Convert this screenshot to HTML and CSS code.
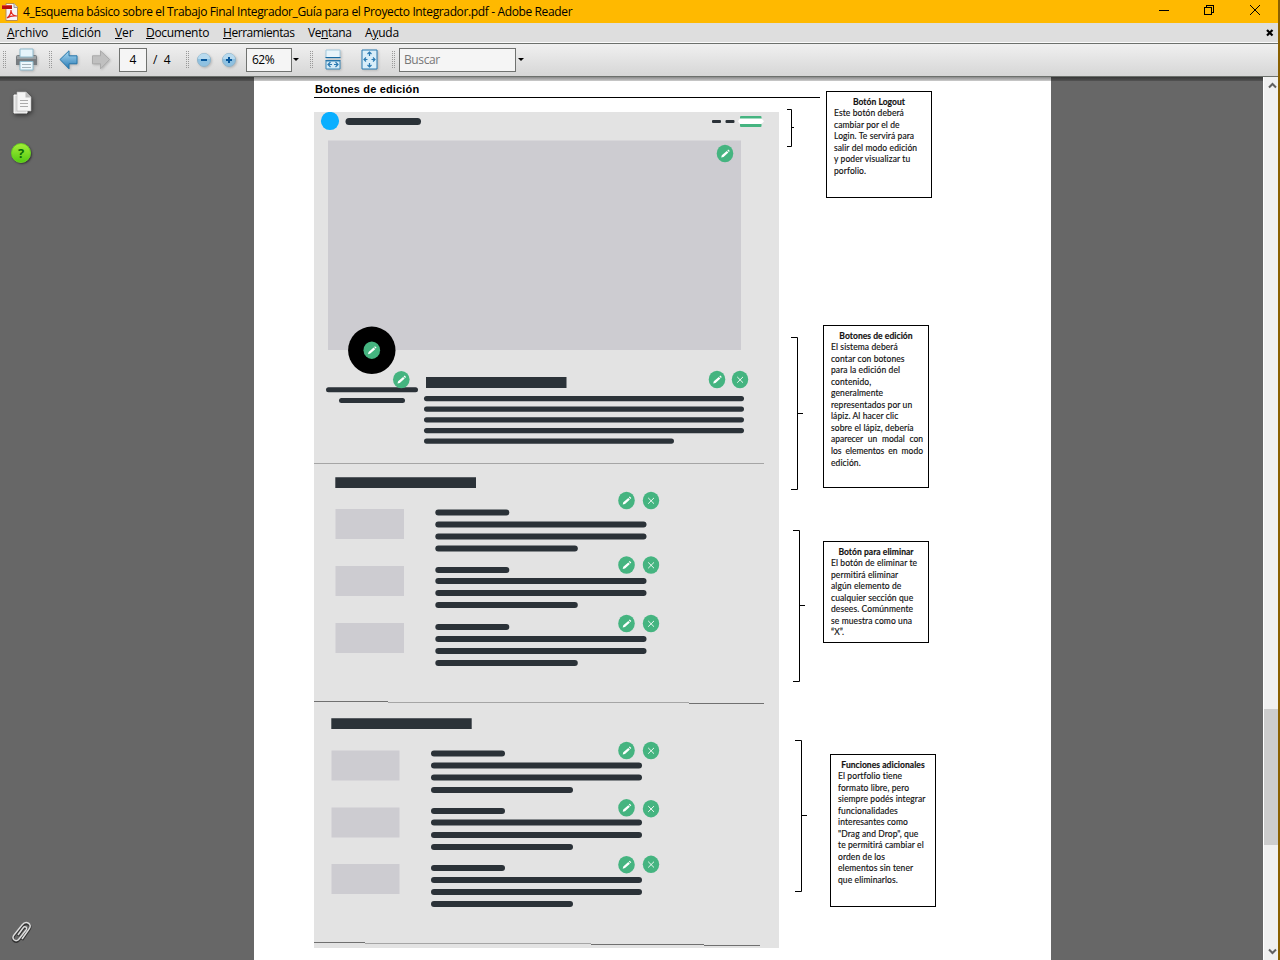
FILE: index.html
```html
<!DOCTYPE html>
<html lang="es">
<head>
<meta charset="utf-8">
<title>Adobe Reader</title>
<link rel="stylesheet" href="styles.css">
</head>
<body>
<div class="window">
  <header class="titlebar">
    <svg class="app-icon" width="18" height="18" viewBox="0 0 18 18"><path d="M4 .5h8l3.500 3.500v13.500H4z" fill="#f5f5f8" stroke="#b98d50"/><path d="M12 .5v4h3.500" fill="#ddd" stroke="#999"/><path d="M5 15c3-2 4-5 4-8 0 4 3 6 6 6-4-.6-7 0-10 2z" fill="none" stroke="#e12a20" stroke-width="1.200"/><path d="M0 2h10v4H0z" fill="#b90f0f"/><path d="M0 2h10v1H0z" fill="#df4b3b"/></svg>
    <h1 class="title">4_Esquema básico sobre el Trabajo Final Integrador_Guía para el Proyecto Integrador.pdf - Adobe Reader</h1>
    <svg class="window-buttons" width="104" height="14" viewBox="0 0 104 14" fill="none" stroke="#000" shape-rendering="crispEdges"><path d="M1 6.500h10M46.500 3.500h7v7h-7zM48.500 3v-1.500h7v7h-2"/><path d="M92 1l10 10M102 1l-10 10" shape-rendering="auto"/></svg>
  </header>
  <nav class="menubar">
    <span class="menu m1"><u>A</u>rchivo</span><span class="menu m2"><u>E</u>dición</span><span class="menu m3"><u>V</u>er</span><span class="menu m4"><u>D</u>ocumento</span><span class="menu m5"><u>H</u>erramientas</span><span class="menu m6">Ve<u>n</u>tana</span><span class="menu m7">A<u>y</u>uda</span>
    <svg class="doc-close" width="8" height="8" viewBox="0 0 8 8"><path d="M1 1l5.500 5.500M6.500 1L1 6.500" stroke="#000" stroke-width="2.200"/></svg>
  </nav>
  <div class="toolbar">
    <i class="grip g1"></i>
    <svg class="print" width="24" height="24" viewBox="0 0 24 24"><path d="M1 9q0-2 2-2h17q2 0 2 2v8H1z" fill="#777c80"/><path d="M2 8h19v3H2z" fill="#9da2a5"/><path d="M5 1h13v8H5z" fill="#e5f4fb" stroke="#8fbacd"/><path d="M5 13.500h13v8.500H5z" fill="#edf7fc" stroke="#8fbacd"/><path d="M7 16.500h9M7 19.500h9" stroke="#a5b4bc"/></svg>
    <i class="grip g2"></i>
    <svg class="back" width="20" height="20" viewBox="0 0 20 20"><defs><linearGradient id="blue" x2="0" y2="1"><stop stop-color="#aedcf4"/><stop offset="1" stop-color="#2679b4"/></linearGradient></defs><path d="M1 9.500L10 .8v5h8v8h-8v5z" fill="url(#blue)" stroke="#2576aa"/></svg>
    <svg class="forward" width="20" height="20" viewBox="0 0 20 20"><path d="M18.500 9.500L9.500.8v5h-8v8h8v5z" fill="#c0c0c0" stroke="#aaa"/></svg>
    <span class="field page-no">4</span><span class="page-total">/&nbsp; 4</span>
    <i class="grip g3"></i>
    <svg class="zoom-out" width="16" height="16" viewBox="0 0 16 16"><circle cx="8" cy="8" r="6.500" fill="#8fc1e1" stroke="#8fb4cb"/><path d="M2 7a6 5.500 0 0 1 12 0" fill="#b8daee"/><path d="M5 8h6" stroke="#07569a" stroke-width="2"/></svg>
    <svg class="zoom-in" width="16" height="16" viewBox="0 0 16 16"><circle cx="8" cy="8" r="6.500" fill="#8fc1e1" stroke="#8fb4cb"/><path d="M2 7a6 5.500 0 0 1 12 0" fill="#b8daee"/><path d="M5 8h6M8 5v6" stroke="#07569a" stroke-width="2"/></svg>
    <span class="field zoom-level">62%</span><i class="caret c1"></i>
    <i class="grip g4"></i>
    <svg class="fit-width" width="17" height="22" viewBox="0 0 17 22"><path d="M1 1h14v8H1z" fill="#e7f4fb" stroke="#a3c9de"/><path d="M.5 8.500h15M.5 11.500h15" stroke="#1769a2"/><path d="M1 12h14v8H1z" fill="#d4ebf7" stroke="#3b88b8"/><path d="M3 15.500h4M9 15.500h4M5.500 13L3 15.500 5.500 18M10.500 13l2.500 2.500-2.500 2.500" fill="none" stroke="#2b7ab2" stroke-width="1.200"/></svg>
    <svg class="fit-page" width="17" height="22" viewBox="0 0 17 22"><path d="M1 1h15v19H1z" fill="#d9eef9" stroke="#2678b0"/><path d="M8.500 3v4M8.500 14v4M3 10.500h3.500M10.500 10.500h3.500M6.500 5l2-2 2 2M6.500 16l2 2 2-2M5 8.500l-2 2 2 2M12 8.500l2 2-2 2" fill="none" stroke="#2b7ab2" stroke-width="1.200"/></svg>
    <i class="grip g5"></i>
    <span class="field search">Buscar</span><i class="caret c2"></i>
  </div>
  <main class="viewer">
    <aside class="side">
      <svg class="pages" width="20" height="24" viewBox="0 0 20 24"><path d="M1 4h13v18H1z" fill="#ddd" stroke="#fff"/><path d="M4 1h9l5 5v14H4z" fill="#f5f5f5" stroke="#bbb" stroke-width=".6"/><path d="M12.500 1v5.500H18z" fill="#bbb"/><path d="M7 9.500h8M7 12.500h8M7 15.500h8" stroke="#aaa"/></svg>
      <span class="help">?</span>
      <svg class="clip" width="22" height="24" viewBox="0 0 22 24"><path d="M7 14l5-7c2-3 5 0 3 2L8 18c-3 4-8 0-5-4l8-10c4-5 11-1 7 4l-7 10" transform="translate(0 1)" fill="none" stroke="#333" stroke-width="2.600"/><path d="M7 14l5-7c2-3 5 0 3 2L8 18c-3 4-8 0-5-4l8-10c4-5 11-1 7 4l-7 10" fill="none" stroke="#ddd" stroke-width="1.500"/></svg>
    </aside>
    <article class="page">
      <section class="document">
        <h2 class="heading">Botones de edición</h2>
        <svg class="wireframe" width="465" height="836" viewBox="314 112 465 836">
          <defs>
            <g id="edit"><ellipse rx="8.300" ry="8.700" fill="#45b480"/><path d="M-3.800 4l.6-2.300L1.800-2.600 3.400-1-1.500 3.400zM2.300-3.200l.9-.8 1.600 1.500-.9.900z" fill="#fff"/></g>
            <g id="remove"><ellipse rx="8.200" ry="8.700" fill="#45b480"/><path d="M-2.800-2.600L3 3.200M3-2.600L-2.800 3.200" stroke="#fff" stroke-width=".9"/></g>
          </defs>
          <path d="M314 112h465v836H314z" fill="#e3e3e3"/>
          <circle cx="330" cy="121" r="9.100" fill="#0aafff"/>
          <path d="M328 140.500h413V350H328z" fill="#cdccd1"/>
          <g fill="#2b3238">
            <rect x="345.500" y="118" width="75.500" height="7" rx="3.500"/>
            <rect x="712" y="120" width="9" height="3" rx="1"/><rect x="725.500" y="120" width="9" height="3" rx="1"/>
            <rect x="326" y="387.200" width="92" height="5" rx="2.500"/><rect x="339" y="398" width="66" height="5" rx="2.500"/>
            <path d="M426 377h140.500v11H426zM335.300 477.300H476V488H335.300zM331.300 718.300h140.400V729H331.300z"/>
            <rect x="424" y="396" width="320" height="5.200" rx="2.600"/><rect x="424" y="406.500" width="320" height="5.200" rx="2.600"/><rect x="424" y="417.200" width="320" height="5.200" rx="2.600"/><rect x="424" y="428" width="320" height="5.200" rx="2.600"/><rect x="424" y="438.500" width="250" height="5.200" rx="2.600"/>
            <rect x="435.300" y="509.400" width="74" height="6" rx="3"/><rect x="435.300" y="521.400" width="211.200" height="6" rx="3"/><rect x="435.300" y="533.400" width="211.200" height="6" rx="3"/><rect x="435.300" y="545.400" width="142.500" height="6" rx="3"/>
            <rect x="435.300" y="567" width="74" height="6" rx="3"/><rect x="435.300" y="578" width="211.200" height="6" rx="3"/><rect x="435.300" y="590" width="211.200" height="6" rx="3"/><rect x="435.300" y="602" width="142.500" height="6" rx="3"/>
            <rect x="435.300" y="624" width="74" height="6" rx="3"/><rect x="435.300" y="636" width="211.200" height="6" rx="3"/><rect x="435.300" y="648" width="211.200" height="6" rx="3"/><rect x="435.300" y="660" width="142.500" height="6" rx="3"/>
            <rect x="431" y="750.400" width="74" height="6" rx="3"/><rect x="431" y="762.400" width="211" height="6" rx="3"/><rect x="431" y="774.400" width="211" height="6" rx="3"/><rect x="431" y="787" width="142" height="6" rx="3"/>
            <rect x="431" y="808" width="74" height="6" rx="3"/><rect x="431" y="819.400" width="211" height="6" rx="3"/><rect x="431" y="832" width="211" height="6" rx="3"/><rect x="431" y="844" width="142" height="6" rx="3"/>
            <rect x="431" y="865" width="74" height="6" rx="3"/><rect x="431" y="877" width="211" height="6" rx="3"/><rect x="431" y="889" width="211" height="6" rx="3"/><rect x="431" y="901" width="142" height="6" rx="3"/>
          </g>
          <rect x="740" y="116" width="21.500" height="11" rx="1" fill="#45b480"/><path d="M738 121.300l2-2.800h21.500l2.500 2.800-2.500 2.700H740z" fill="#fff"/>
          <path d="M335.500 509H404v30h-68.500zM335.500 566H404v30h-68.500zM335.500 623H404v30h-68.500zM331.500 750.500h68v30h-68zM331.500 807.500h68v30h-68zM331.500 864h68v30h-68z" fill="#cdccd1"/>
          <g fill="none" stroke="#a5a5a5"><path d="M314 463.500h450M388 702.500h301M365 943.500h226"/><path d="M314 701.500h74M689 703.500h75M314 942.500h51M591 944.500h113M704 945.500h56" stroke="#707070"/></g>
          <circle cx="371.800" cy="350.300" r="23.700"/>
          <use href="#edit" x="725" y="153.500"/><use href="#edit" x="371.800" y="350.200"/><use href="#edit" x="401.300" y="379.600"/><use href="#edit" x="717" y="379.500"/><use href="#remove" x="740" y="379.500"/>
          <use href="#edit" x="626.500" y="500.500"/><use href="#remove" x="651" y="500.500"/><use href="#edit" x="626.500" y="565"/><use href="#remove" x="651" y="565"/><use href="#edit" x="626.500" y="623.500"/><use href="#remove" x="651" y="623.500"/>
          <use href="#edit" x="626.500" y="750.500"/><use href="#remove" x="651" y="750.500"/><use href="#edit" x="626.500" y="807.800"/><use href="#remove" x="651" y="808.700"/><use href="#edit" x="626.500" y="864.700"/><use href="#remove" x="651" y="864.300"/>
        </svg>
      </section>
      <section class="notes">
        <div class="row r1">
          <svg class="bracket" width="7" height="38" viewBox="0 0 7 38"><path d="M0 .5h4.500v37H0M4.500 18.500H7"/></svg>
          <div class="note"><b>Botón Logout</b><span>Este botón deberá</span><span>cambiar por el de</span><span>Login. Te servirá para</span><span>salir del modo edición</span><span>y poder visualizar tu</span><span>porfolio.</span></div>
        </div>
        <div class="row r2">
          <svg class="bracket" width="12" height="153" viewBox="0 0 12 153"><path d="M0 .5h6.500v152H0M6.500 76.500H12"/></svg>
          <div class="note"><b>Botones de edición</b><span>El sistema deberá</span><span>contar con botones</span><span>para la edición del</span><span>contenido,</span><span>generalmente</span><span>representados por un</span><span>lápiz. Al hacer clic</span><span>sobre el lápiz, debería</span><span class="justify">aparecer un modal con</span><span class="justify">los elementos en modo</span><span>edición.</span></div>
        </div>
        <div class="row r3">
          <svg class="bracket" width="12" height="152" viewBox="0 0 12 152"><path d="M0 .5h6.500v151H0M6.500 75.500H12"/></svg>
          <div class="note"><b>Botón para eliminar</b><span>El botón de eliminar te</span><span>permitirá eliminar</span><span>algún elemento de</span><span>cualquier sección que</span><span>desees. Comúnmente</span><span>se muestra como una</span><span>“X”.</span></div>
        </div>
        <div class="row r4">
          <svg class="bracket" width="12" height="152" viewBox="0 0 12 152"><path d="M0 .5h6.500v151H0M6.500 75.500H12"/></svg>
          <div class="note"><b>Funciones adicionales</b><span>El portfolio tiene</span><span>formato libre, pero</span><span>siempre podés integrar</span><span>funcionalidades</span><span>interesantes como</span><span>"Drag and Drop", que</span><span>te permitirá cambiar el</span><span>orden de los</span><span>elementos sin tener</span><span>que eliminarlos.</span></div>
        </div>
      </section>
    </article>
    <div class="scrollbar">
      <svg width="9" height="7" viewBox="0 0 9 7"><path d="M1 5.500l3.500-3.500L8 5.500"/></svg>
      <i class="thumb"></i>
      <svg width="9" height="7" viewBox="0 0 9 7"><path d="M1 1.500L4.500 5 8 1.500"/></svg>
    </div>
  </main>
</div>
</body>
</html>
```

FILE: styles.css
```css
* { box-sizing: border-box; }
body { margin: 0; width: 1280px; height: 960px; overflow: hidden; background: #8a6000; font-family: "Open Sans", "Noto Sans", sans-serif; font-size: 12px; color: #000; }
svg { display: block; flex: none; }
.window { width: 1278px; height: 960px; display: flex; flex-direction: column; }
.titlebar { height: 23px; display: flex; align-items: center; background: #ffb900; }
.app-icon { margin-left: 2px; }
.title { margin: 0 0 0 3px; width: 560px; font-size: 12px; font-weight: 400; line-height: 23px; white-space: nowrap; letter-spacing: -.365px; }
.window-buttons { margin: -2px 16px 0 auto; }
.menubar { height: 19px; display: flex; padding-left: 7px; background: #dedede; line-height: 19px; }
.menu { white-space: nowrap; letter-spacing: -.1px; }
.menu u { text-underline-offset: 1px; }
.m1 { width: 55px; }
.m2 { width: 53px; letter-spacing: -.2px; }
.m3 { width: 31px; }
.m4 { width: 77px; letter-spacing: -.3px; }
.m5 { width: 85px; letter-spacing: -.5px; }
.m6 { width: 57px; letter-spacing: -.4px; }
.m5 { letter-spacing: -.45px; }
.m7 { letter-spacing: -.2px; }
.doc-close { margin: 6px 4px 0 auto; }
.toolbar { height: 35px; display: flex; align-items: center; border-top: 1px solid #fafafa; border-bottom: 1px solid #6c706c; box-shadow: inset 0 1px #6c706c; background: linear-gradient(#f1f1f1, #d6d6d6); }
.grip { flex: none; width: 4px; height: 18px; background: radial-gradient(circle at .5px .5px, #999 0 .7px, transparent .8px) 0 0 / 2px 2px; }
.g1 { margin-left: 3px; }
.print { margin-left: 8px; }
.g2 { margin-left: 10px; }
.back { margin-left: 6px; }
.forward { margin-left: 12px; }
.print, .back, .forward, .zoom-out, .zoom-in, .fit-width, .fit-page { filter: drop-shadow(1px 1px 1px #9999); }
.field { flex: none; height: 24px; border: 1px solid #707270; background: #f5f5f5; line-height: 21px; }
.page-no { width: 28px; margin-left: 8px; text-align: center; }
.page-total { width: 18px; margin-left: 6px; white-space: nowrap; }
.g3 { margin-left: 15px; }
.zoom-out { margin-left: 6px; }
.zoom-in { margin-left: 9px; }
.zoom-level { width: 46px; margin-left: 9px; padding-left: 5px; letter-spacing: -.5px; }
.caret { border: 3px solid transparent; border-top-color: #000; border-bottom: 0; margin-left: 1px; }
.g4 { margin-left: 11px; }
.fit-width { margin-left: 11px; }
.fit-page { margin-left: 19px; }
.g5 { margin-left: 14px; }
.search { width: 117px; margin-left: 3px; padding-left: 4px; color: #777; letter-spacing: -.4px; }
.c2 { margin-left: 2px; }
.viewer { position: relative; height: 883px; display: flex; background: #676767; }
.viewer::before { content: ""; position: absolute; left: 0; top: 0; width: 1263px; height: 4px; background: linear-gradient(#0007, #0003); }
.side { width: 254px; display: flex; flex-direction: column; align-items: flex-start; }
.pages { margin: 14px 0 0 13px; filter: drop-shadow(1px 2px 2px #333); }
.help { width: 20px; height: 20px; margin: 28px 0 0 11px; border: 1px solid #67d31c; border-radius: 50%; background: linear-gradient(#a4ed38, #54cb13); box-shadow: 1px 1px 2px #333; color: #086b08; font: bold 13px/18px "Open Sans", sans-serif; text-align: center; }
.clip { margin: auto 0 15px 11px; }
.page { width: 797px; display: flex; padding-left: 60px; background: #fff; }
.document { width: 465px; }
.heading { width: 506px; height: 21px; margin: 0 0 14px; padding-left: 1px; border-bottom: 1px solid #000; font: bold 11px/24px "Liberation Sans", Arial, sans-serif; letter-spacing: .16px; }
.notes { flex: 1; padding-top: 14px; font-family: Lato, sans-serif; font-size: 8.5px; line-height: 11.54px; }
.row { display: flex; align-items: flex-start; }
.bracket { fill: none; stroke: #000; }
.note { flex: none; width: 106px; border: 1px solid #000; padding: 4.500px 7px 0; color: #111; -webkit-text-stroke: .15px #111; }
.note b, .note span { display: block; white-space: nowrap; letter-spacing: .1px; }
.note b { text-align: center; font-weight: 700; letter-spacing: .05px; }
.note .justify { white-space: normal; text-align-last: justify; margin-right: -2px; letter-spacing: 0; }
.r1 { padding-left: 8px; height: 233px; }
.r1 .bracket { margin-top: 18px; }
.r1 .note { margin-left: 32px; height: 107px; }
.r2 { padding-left: 12px; height: 206px; }
.r2 .bracket { margin-top: 13px; }
.r2 .note { margin: 1px 0 0 20px; height: 163px; }
.r3 { padding-left: 14px; height: 210px; }
.r3 .note { margin: 11px 0 0 18px; height: 102px; }
.r4 { padding-left: 16px; }
.r4 .note { margin: 14px 0 0 23px; height: 153px; }
.scrollbar { width: 15px; margin-left: auto; display: flex; flex-direction: column; align-items: center; background: #f0f0f0; border-left: 1px solid #fff; padding: 5px 0; }
.scrollbar svg { fill: none; stroke: #606060; stroke-width: 2; margin-left: 2px; }
.thumb { width: 14px; height: 136px; margin: 620px 0 auto; background: #cdcdcd; }
```
